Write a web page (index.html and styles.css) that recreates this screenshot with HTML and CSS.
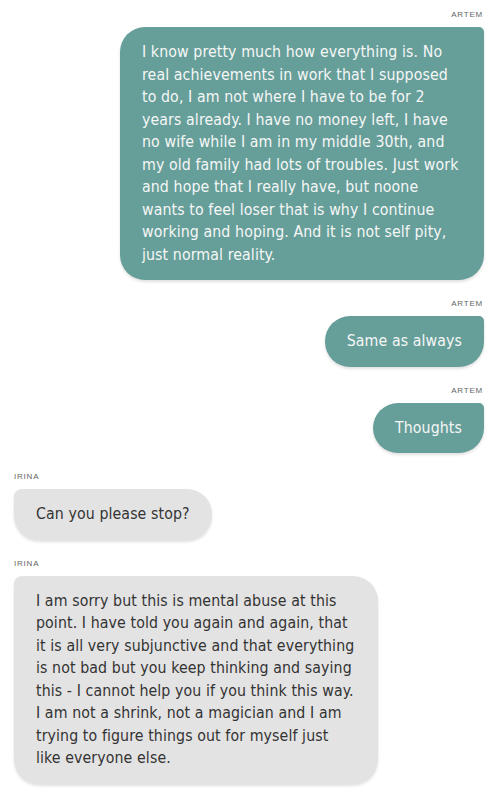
FILE: index.html
```html
<!DOCTYPE html>
<html lang="en">
<head>
  <meta charset="UTF-8" />
  <meta name="viewport" content="width=device-width, initial-scale=1.0"/>
  <title>Chat</title>
  <link rel="stylesheet" href="styles.css">
</head>
<body>
  <div class="chat">

    <div class="msg mine">
      <div class="author">Artem</div>
      <div class="bubble">I know pretty much how everything is. No real achievements in work that I supposed to do, I am not where I have to be for 2 years already. I have no money left, I have no wife while I am in my middle 30th, and my old family had lots of troubles. Just work and hope that I really have, but noone wants to feel loser that is why I continue working and hoping. And it is not self pity, just normal reality.</div>
    </div>

    <div class="msg mine">
      <div class="author">Artem</div>
      <div class="bubble">Same as always</div>
    </div>

    <div class="msg mine">
      <div class="author">Artem</div>
      <div class="bubble">Thoughts</div>
    </div>

    <div class="msg theirs">
      <div class="author">Irina</div>
      <div class="bubble">Can you please stop?</div>
    </div>

    <div class="msg theirs">
      <div class="author">Irina</div>
      <div class="bubble">I am sorry but this is mental abuse at this point. I have told you again and again, that it is all very subjunctive and that everything is not bad but you keep thinking and saying this - I cannot help you if you think this way. I am not a shrink, not a magician and I am trying to figure things out for myself just like everyone else.</div>
    </div>

  </div>
</body>
</html>
```

FILE: styles.css
```css
body {
  margin: 0;
  padding: 0;
  background: #fff;
  font-family: "Liberation Sans", Arial, sans-serif;
  color: #333;
}

.chat {
  display: flex;
  flex-direction: column;
  gap: 19px;
  padding: 10px 9px 10px 14px;
}

.msg {
  display: flex;
  flex-direction: column;
}

.mine {
  align-items: flex-end;
}

.theirs {
  align-items: flex-start;
}

.author {
  font-size: 8px;
  line-height: 10px;
  letter-spacing: 0.8px;
  text-transform: uppercase;
  color: #666;
  margin-bottom: 7px;
}

.mine .author {
  margin-right: 1px;
}

.bubble {
  max-width: 320px;
  padding: 14px 22px;
  font-family: "DejaVu Sans Condensed", "Liberation Sans", sans-serif;
  font-size: 15.75px;
  line-height: 22.5px;
  letter-spacing: 0.1px;
  border-radius: 25px;
  box-shadow: 0 2px 3px rgba(0, 0, 0, 0.12);
}

.mine .bubble {
  background-color: #669e99;
  color: #f5f7f6;
  border-top-right-radius: 5px;
}

.theirs .bubble {
  background-color: #e3e3e3;
  color: #333;
  border-top-left-radius: 8px;
}
```
